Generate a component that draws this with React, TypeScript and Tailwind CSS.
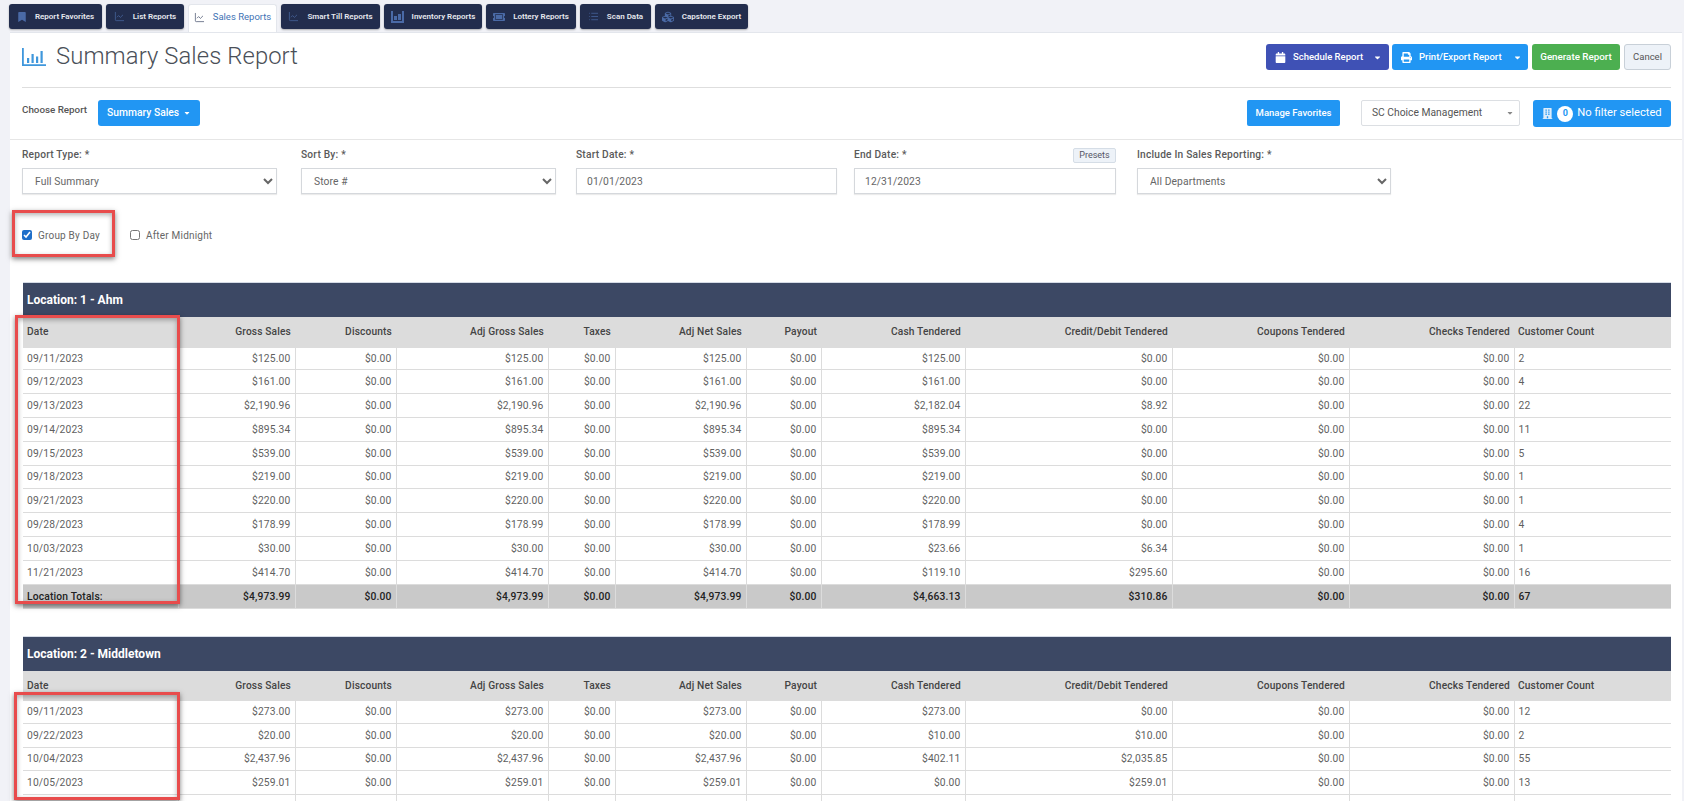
import React from "react";
import { FaBookmark, FaTicketAlt, FaCubes, FaCalendar, FaPrint, FaBuilding, FaCaretDown } from "react-icons/fa";
import { ChartLine, List } from "lucide-react";

const font = { fontFamily: "Roboto, 'Liberation Sans', sans-serif" };
const widths = [155, 117, 101, 152, 67, 131, 75, 144, 207, 177, 165, 157];
const heads = ["Date", "Gross Sales", "Discounts", "Adj Gross Sales", "Taxes", "Adj Net Sales", "Payout", "Cash Tendered", "Credit/Debit Tendered", "Coupons Tendered", "Checks Tendered", "Customer Count"];

const r = (d: string, g: string, cash: string, credit: string, n: string) => [d, g, "$0.00", g, "$0.00", g, "$0.00", cash, credit, "$0.00", "$0.00", n];

const t1 = [
  r("09/11/2023", "$125.00", "$125.00", "$0.00", "2"),
  r("09/12/2023", "$161.00", "$161.00", "$0.00", "4"),
  r("09/13/2023", "$2,190.96", "$2,182.04", "$8.92", "22"),
  r("09/14/2023", "$895.34", "$895.34", "$0.00", "11"),
  r("09/15/2023", "$539.00", "$539.00", "$0.00", "5"),
  r("09/18/2023", "$219.00", "$219.00", "$0.00", "1"),
  r("09/21/2023", "$220.00", "$220.00", "$0.00", "1"),
  r("09/28/2023", "$178.99", "$178.99", "$0.00", "4"),
  r("10/03/2023", "$30.00", "$23.66", "$6.34", "1"),
  r("11/21/2023", "$414.70", "$119.10", "$295.60", "16"),
];
const t2 = [
  r("09/11/2023", "$273.00", "$273.00", "$0.00", "12"),
  r("09/22/2023", "$20.00", "$10.00", "$10.00", "2"),
  r("10/04/2023", "$2,437.96", "$402.11", "$2,035.85", "55"),
  r("10/05/2023", "$259.01", "$0.00", "$259.01", "13"),
  ["", "", "", "", "", "", "", "", "", "", "", ""],
];
const totals = r("Location Totals:", "$4,973.99", "$4,663.13", "$310.86", "67");

function ReportTable({ title, rows, total, heights, headH }: { title: string; rows: string[][]; total?: string[]; heights: number[]; headH: number }) {
  return (
    <table className="table-fixed border-collapse w-[1648px] text-[10.3px] tracking-[0.15px]">
      <colgroup>
        {widths.map((w, i) => (
          <col key={i} style={{ width: w }} />
        ))}
      </colgroup>
      <thead>
        <tr style={{ height: 34 }} className="bg-[#3c4864]">
          <th colSpan={12} className="text-left pl-1 text-white text-[12px] font-bold tracking-normal border-t border-[#d5dbe6]">
            {title}
          </th>
        </tr>
        <tr style={{ height: headH }} className="bg-[#dcdcdc]">
          {heads.map((h, i) => (
            <th key={h} className={`font-medium text-[10.2px] text-[#444] px-1 ${i === 0 || i === 11 ? "text-left" : "text-right"}`}>
              {h}
            </th>
          ))}
        </tr>
      </thead>
      <tbody>
        {rows.map((row, ri) => (
          <tr key={ri} style={{ height: heights[ri] }}>
            {row.map((c, i) => (
              <td key={i} className={`border-b border-[#dcdcdc] text-[#5f5f5f] px-1 ${i === 11 ? "" : "border-r"} ${i === 0 || i === 11 ? "text-left" : "text-right"}`}>
                {c}
              </td>
            ))}
          </tr>
        ))}
        {total && (
          <tr style={{ height: 24 }} className="bg-[#c9c9c9]">
            {total.map((c, i) => (
              <td key={i} className={`border-b border-[#dcdcdc] font-medium text-[#222] px-1 ${i === 11 ? "" : "border-r border-r-[#dcdcdc]"} ${i === 0 || i === 11 ? "text-left" : "text-right"}`}>
                {c}
              </td>
            ))}
          </tr>
        )}
      </tbody>
    </table>
  );
}

const tabIcon = "text-[#4a6aa6] shrink-0";
const tabs: { label: string; w: string; icon: React.ReactNode; active?: boolean }[] = [
  { label: "Report Favorites", w: "w-[93px]", icon: <FaBookmark size={10} className={tabIcon} /> },
  { label: "List Reports", w: "w-[78px]", icon: <ChartLine size={11} strokeWidth={1.5} className={tabIcon} /> },
  { label: "Sales Reports", w: "w-[89px]", icon: <ChartLine size={11} strokeWidth={1.5} className="text-[#3c4864] shrink-0" />, active: true },
  { label: "Smart Till Reports", w: "w-[99px]", icon: <ChartLine size={11} strokeWidth={1.5} className={tabIcon} /> },
  {
    label: "Inventory Reports",
    w: "w-[98px]",
    icon: (
      <svg width="13" height="12" viewBox="0 0 13 12" className={tabIcon} fill="currentColor">
        <path d="M0 0h2v12H0zM11 0h2v12h-2zM2 10h9v2H2z" />
        <path d="M3 5h3v4H3zM7 3h3v6H7z" />
      </svg>
    ),
  },
  { label: "Lottery Reports", w: "w-[90px]", icon: <FaTicketAlt size={12} className={tabIcon} /> },
  { label: "Scan Data", w: "w-[71px]", icon: <List size={11} strokeWidth={1.5} className={tabIcon} /> },
  { label: "Capstone Export", w: "w-[93px]", icon: <FaCubes size={12} className={tabIcon} /> },
];

const label = "block text-[10.2px] font-medium text-[#5a5a5a] tracking-[0.2px] leading-none";
const field = "block h-[26px] bg-white border border-[#d5d8dc] text-[10.3px] text-[#666] tracking-[0.1px] shadow-[0_1px_1px_rgba(0,0,0,0.08)] outline-none";

function Boxed({ className }: { className: string }) {
  return <div className={`absolute border-[3px] border-[#e84c4c] shadow-[0_2px_5px_rgba(0,0,0,0.5),inset_0_2px_5px_rgba(0,0,0,0.3)] pointer-events-none ${className}`} />;
}

export default function App() {
  return (
    <div style={font} className="relative w-[1684px] h-[801px] overflow-hidden bg-[#f1f2f7]">
      <nav className="flex gap-1 pl-[9px] pt-1 h-[32px] items-start">
        {tabs.map((t) => (
          <div
            key={t.label}
            className={`${t.w} flex items-center justify-center gap-[8px] rounded-[3px] ${
              t.active
                ? "h-[28px] bg-white text-[#3f73b5] border-x border-t border-[#e3e6ec] rounded-b-none pb-[3px] text-[9.5px]"
                : "h-[25px] bg-[#222d4d] text-[#e6e8ee] font-semibold text-[8px] shadow-[0_1px_2px_rgba(0,0,0,0.3)]"
            }`}
          >
            {t.icon}
            <span>{t.label}</span>
          </div>
        ))}
      </nav>

      <main className="ml-[10px] mr-[2px] h-[769px] bg-white border-t border-[#e3e6ec]">
        <div className="mx-3 mr-[11px] h-[55px] border-b border-[#dedede] flex items-start justify-between">
          <div className="flex items-center gap-[10px] mt-[9px] h-[30px]">
            <svg width="24" height="18" viewBox="0 0 24 18" fill="#3f97dc">
              <path d="M0 0h1.8v16.2H24V18H0z" />
              <path d="M5 10h2.2v5H5zM9.5 6h2.2v9H9.5zM14 8.5h2.2v6.5H14zM18.5 3h2.2v12h-2.2z" />
            </svg>
            <h1 className="text-[23.8px] font-light text-[#4a4f58] tracking-[0.1px] leading-none">Summary Sales Report</h1>
          </div>
          <div className="flex mt-[11px] text-white text-[9.5px] font-medium">
            <div className="w-[123px] h-[26px] bg-[#3f51b5] rounded-[3px] flex items-center pl-[9px] pr-[7px] justify-between">
              <span className="flex items-center gap-[7px]">
                <FaCalendar size={11} />
                Schedule Report
              </span>
              <FaCaretDown size={9} />
            </div>
            <div className="ml-[3px] w-[136px] h-[26px] bg-[#2196f3] rounded-[3px] flex items-center pl-[9px] pr-[6px] justify-between">
              <span className="flex items-center gap-[7px]">
                <FaPrint size={11} />
                Print/Export Report
              </span>
              <FaCaretDown size={9} />
            </div>
            <div className="ml-1 w-[88px] h-[26px] bg-[#4caf50] rounded-[3px] flex items-center justify-center text-[9.8px]">Generate Report</div>
            <div className="ml-1 w-[47px] h-[26px] bg-[#edf2f8] border border-[#c8d0d8] text-[#555] font-normal rounded-[3px] flex items-center justify-center">Cancel</div>
          </div>
        </div>

        <div className="h-[52px] border-b border-[#e6e6e6] pl-3 pr-[11px] flex items-start">
          <span className="mt-[17px] text-[9.8px] font-medium text-[#555] leading-none">Choose Report</span>
          <div className="ml-[11px] mt-3 w-[102px] h-[26px] bg-[#2196f3] text-white text-[10.3px] font-medium rounded-[3px] flex items-center justify-center gap-1">
            Summary Sales
            <FaCaretDown size={8} />
          </div>
          <div className="ml-auto mt-3 w-[93px] h-[26px] bg-[#2196f3] text-white text-[9.5px] font-medium rounded-[2px] flex items-center justify-center">Manage Favorites</div>
          <div className="ml-[21px] mt-3 w-[159px] h-[26px] bg-white border border-[#dcdfe3] rounded-[2px] flex items-center justify-between pl-[10px] pr-[5px] text-[10.3px] text-[#555]">
            SC Choice Management
            <FaCaretDown size={8} className="text-[#888]" />
          </div>
          <div className="ml-[13px] mt-3 w-[138px] h-[27px] bg-[#2196f3] text-white rounded-[3px] flex items-center justify-center gap-[4px] text-[11.2px]">
            <FaBuilding size={11} className="text-[#dcecfb]" />
            <span className="w-4 h-4 rounded-full bg-white text-[#2196f3] text-[9px] font-bold flex items-center justify-center">0</span>
            No filter selected
          </div>
        </div>

        <div className="pl-3 flex items-start pt-[10px] h-[88px]">
          <div className="w-[255px]">
            <label className={`${label} h-[18px]`}>Report Type: *</label>
            <select className={`${field} w-full pl-2`} defaultValue="a">
              <option value="a">Full Summary</option>
            </select>
          </div>
          <div className="ml-6 w-[255px]">
            <label className={`${label} h-[18px]`}>Sort By: *</label>
            <select className={`${field} w-full pl-2`} defaultValue="a">
              <option value="a">Store #</option>
            </select>
          </div>
          <div className="ml-5 w-[261px]">
            <label className={`${label} h-[18px]`}>Start Date: *</label>
            <input className={`${field} w-full pl-[10px]`} defaultValue="01/01/2023" readOnly />
          </div>
          <div className="ml-[17px] w-[262px] relative">
            <label className={`${label} h-[18px]`}>End Date: *</label>
            <span className="absolute right-0 -top-[2px] w-[43px] h-[15px] flex items-center justify-center bg-[#edf2f8] border border-[#d5dde6] rounded-[2px] text-[9px] text-[#556]">Presets</span>
            <input className={`${field} w-full pl-[10px]`} defaultValue="12/31/2023" readOnly />
          </div>
          <div className="ml-[21px] w-[254px]">
            <label className={`${label} h-[18px]`}>Include In Sales Reporting: *</label>
            <select className={`${field} w-full pl-2`} defaultValue="a">
              <option value="a">All Departments</option>
            </select>
          </div>
        </div>

        <div className="pl-3 flex items-center h-[20px] -mt-[3px] text-[10px] tracking-[0.2px] text-[#666]">
          <input type="checkbox" defaultChecked className="w-[10px] h-[10px] m-0 accent-[#1f6fc9]" />
          <span className="ml-[6px]">Group By Day</span>
          <input type="checkbox" className="ml-[30px] w-[10px] h-[10px] m-0" />
          <span className="ml-[6px]">After Midnight</span>
        </div>

        <div className="ml-[13px] mt-[37px]">
          <ReportTable title="Location: 1 - Ahm" rows={t1} total={totals} heights={[22, 24, 24, 24, 24, 23, 24, 24, 24, 24]} headH={31} />
          <div className="h-[27px]" />
          <ReportTable title="Location: 2 - Middletown" rows={t2} heights={[23, 24, 23, 24, 24]} headH={30} />
        </div>
      </main>

      <Boxed className="left-[12px] top-[210px] w-[103px] h-[47px]" />
      <Boxed className="left-[15px] top-[315px] w-[165px] h-[289px]" />
      <Boxed className="left-[14px] top-[692px] w-[166px] h-[108px]" />
    </div>
  );
}
